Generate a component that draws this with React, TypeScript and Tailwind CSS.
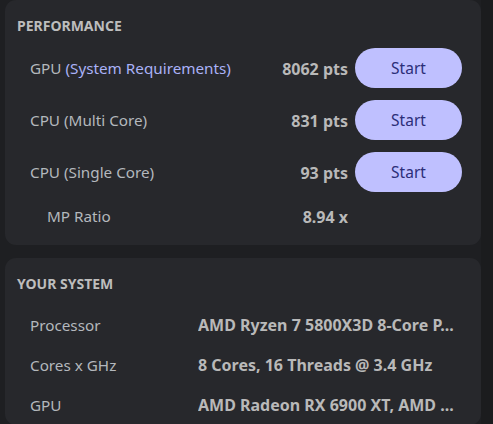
import React from "react";

const font = { fontFamily: '"Noto Sans", "Open Sans", sans-serif' };

type Bench = { label: React.ReactNode; score: string };

const benches: Bench[] = [
  {
    label: (
      <>
        GPU <span className="text-[#aab2f7]">(System Requirements)</span>
      </>
    ),
    score: "8062 pts",
  },
  { label: "CPU (Multi Core)", score: "831 pts" },
  { label: "CPU (Single Core)", score: "93 pts" },
];

const system = [
  { label: "Processor", value: "AMD Ryzen 7 5800X3D 8-Core P..." },
  { label: "Cores x GHz", value: "8 Cores, 16 Threads @ 3.4 GHz" },
  { label: "GPU", value: "AMD Radeon RX 6900 XT, AMD ..." },
];

function Heading({ children }: { children: React.ReactNode }) {
  return (
    <div className="h-5 text-[14px] leading-5 font-bold uppercase text-[#bdbdbd]">
      {children}
    </div>
  );
}

export default function App() {
  return (
    <div
      className="flex h-[424px] w-[493px] overflow-hidden bg-[#1e1f22]"
      style={font}
    >
      <div className="flex min-w-0 flex-1 flex-col gap-[13px] pl-[5px]">
        {/* Performance card */}
        <section className="rounded-[11px] bg-[#27282c] pb-[17px] pl-3 pr-[19px] pt-4">
          <Heading>Performance</Heading>
          <div className="mt-3 flex flex-col gap-3">
            {benches.map((b, i) => (
              <div key={i} className="flex h-10 items-center">
                <div className="flex-1 pl-[13px] pt-px text-[15.25px] text-[#b4b8bd]">
                  {b.label}
                </div>
                <div className="pt-px text-right text-[16px] font-bold text-[#b9b9b9]">
                  {b.score}
                </div>
                <button className="ml-[7px] h-10 w-[107px] rounded-full bg-[#bfc0ff] pt-px text-[15.5px] text-[#2c2e78]">
                  Start
                </button>
              </div>
            ))}
            <div className="flex h-6 items-center">
              <div className="flex-1 pl-[30px] pt-px text-[15.25px] text-[#b4b8bd]">
                MP Ratio
              </div>
              <div className="pt-px text-right text-[16px] font-bold text-[#b9b9b9]">
                8.94 x
              </div>
              <div className="ml-[7px] w-[107px]" />
            </div>
          </div>
        </section>

        {/* System card */}
        <section className="min-w-0 flex-1 rounded-[11px] bg-[#27282c] pl-3 pr-[23px] pt-4">
          <Heading>Your System</Heading>
          <div className="mt-[11px] flex flex-col">
            {system.map((s) => (
              <div key={s.label} className="flex h-10 min-w-0 items-center">
                <div className="w-[181px] shrink-0 pl-[13px] text-[15.25px] text-[#b4b8bd]">
                  {s.label}
                </div>
                <div className="min-w-0 flex-1 truncate text-[16px] font-bold text-[#b9b9b9]">
                  {s.value}
                </div>
              </div>
            ))}
          </div>
        </section>
      </div>
      <div className="w-3 shrink-0 bg-[#1b1c1e]" />
    </div>
  );
}
